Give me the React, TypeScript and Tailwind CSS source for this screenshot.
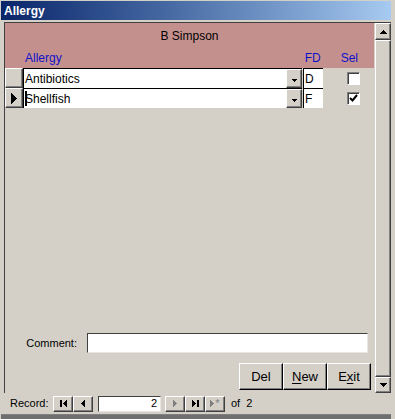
import React from "react";

// classic win9x bevels
const raised =
  "border border-t-white border-l-white border-r-[#404040] border-b-[#404040] shadow-[inset_-1px_-1px_0_#808080]";
const btnRaised =
  "border border-t-white border-l-white border-r-black border-b-black shadow-[inset_-1px_-1px_0_#808080]";
const sunken =
  "border border-t-[#404040] border-l-[#404040] border-r-[#e8e6e0] border-b-[#e8e6e0]";

const font = { fontFamily: '"Liberation Sans", Arial, sans-serif' };

type Dir = "left" | "right" | "up" | "down";

function Tri({ dir, w, h, color = "#000" }: { dir: Dir; w: number; h: number; color?: string }) {
  const d =
    dir === "left"
      ? `M${w} 0 L0 ${h / 2} L${w} ${h}Z`
      : dir === "right"
      ? `M0 0 L${w} ${h / 2} L0 ${h}Z`
      : dir === "up"
      ? `M0 ${h} L${w / 2} 0 L${w} ${h}Z`
      : `M0 0 L${w} 0 L${w / 2} ${h}Z`;
  return (
    <svg width={w} height={h} viewBox={`0 0 ${w} ${h}`} className="block">
      <path d={d} fill={color} shapeRendering="crispEdges" />
    </svg>
  );
}

function Checkbox({ checked }: { checked?: boolean }) {
  return (
    <div className="w-[13px] h-[13px] bg-white border border-t-[#808080] border-l-[#808080] border-r-white border-b-white shadow-[inset_1px_1px_0_#404040] flex items-center justify-center">
      {checked && (
        <svg width="9" height="9" viewBox="0 0 9 9" className="block">
          <path d="M1 4 L3.5 6.5 L8 1" stroke="#000" strokeWidth="2" fill="none" />
        </svg>
      )}
    </div>
  );
}

function Row({ name, fd, sel, current }: { name: string; fd: string; sel?: boolean; current?: boolean }) {
  return (
    <div className="flex h-[20px]">
      <div className={`w-[18px] ${raised} bg-[#d4d0c8] flex items-center justify-center`}>
        {current && <Tri dir="right" w={6} h={11} />}
      </div>
      <div className="w-[279px] flex bg-white border-t border-l border-black">
        <div className="flex-1 flex items-center pl-[1px] text-[12px] text-black">
          {current && <span className="w-[2px] h-[15px] bg-black -mr-[2px]" />}
          <span>{name}</span>
        </div>
        <div className={`w-[16px] ${raised} bg-[#d4d0c8] flex items-end justify-center pb-[5px]`}>
          <Tri dir="down" w={5} h={3} />
        </div>
      </div>
      <div className="w-[20px] ml-[1px] bg-white border-t border-l border-black flex items-center pl-[1px] text-[12px] text-black">
        {fd}
      </div>
      <div className="flex-1 pl-[24px] pt-[4px]">
        <Checkbox checked={sel} />
      </div>
    </div>
  );
}

function NavBtn({ children }: { children: React.ReactNode }) {
  return (
    <div className={`w-[20px] h-[16px] ${raised} bg-[#d4d0c8] flex items-center justify-center`}>{children}</div>
  );
}

export default function App() {
  return (
    <div
      className="w-[395px] h-[419px] bg-[#d4d0c8] flex flex-col pt-[1px] pl-[1px] pr-[4px] overflow-hidden"
      style={font}
    >
      {/* title bar */}
      <div className="h-[19px] bg-gradient-to-r from-[#0a246a] to-[#a6caf0] flex items-center pl-[3px]">
        <span className="text-white font-bold text-[12px] leading-none">Allergy</span>
      </div>

      {/* client */}
      <div className="mt-[2px] ml-[3px] h-[371px] flex border-t border-l border-[#404040]">
        <div className="flex-1 flex flex-col">
          {/* header */}
          <div className="h-[45px] bg-[#c4908e] flex flex-col">
            <div className="pt-[6px] text-center text-[12px] text-black leading-[14px]">B Simpson</div>
            <div className="mt-[8px] flex text-[12px] leading-[14px] text-[#1010c8]">
              <span className="ml-[20px]">Allergy</span>
              <span className="ml-[243px]">FD</span>
              <span className="ml-[20px]">Sel</span>
            </div>
          </div>

          <Row name="Antibiotics" fd="D" />
          <Row name="Shellfish" fd="F" sel current />

          <div className="flex-1" />

          {/* comment */}
          <div className="flex items-center h-[20px]">
            <span className="w-[72px] text-right text-[11px] text-black">Comment:</span>
            <div className={`ml-[10px] w-[281px] h-[20px] bg-white ${sunken}`} />
          </div>

          {/* buttons */}
          <div className="mt-[10px] mb-[3px] flex justify-end pr-[3px]">
            <button className={`w-[44px] h-[27px] ${btnRaised} bg-[#d4d0c8] text-[13px] text-black`}>Del</button>
            <button className={`w-[44px] h-[27px] ${btnRaised} bg-[#d4d0c8] text-[13px] text-black`}>
              <span className="underline underline-offset-2">N</span>ew
            </button>
            <button className={`w-[44px] h-[27px] ${btnRaised} bg-[#d4d0c8] text-[13px] text-black`}>
              E<span className="underline underline-offset-2">x</span>it
            </button>
          </div>
        </div>

        {/* vertical scrollbar */}
        <div className="w-[17px] pl-[1px] flex flex-col">
          <div className={`h-[17px] ${raised} bg-[#d4d0c8] flex items-center justify-center`}>
            <Tri dir="up" w={7} h={4} />
          </div>
          <div className={`flex-1 ${raised} bg-[#d4d0c8]`} />
          <div className={`h-[16px] ${raised} bg-[#d4d0c8] flex items-center justify-center`}>
            <Tri dir="down" w={7} h={4} />
          </div>
        </div>
      </div>

      {/* record navigation */}
      <div className="h-[21px] ml-[3px] flex items-center text-[11px] text-black">
        <span className="ml-[6px] w-[38px]">Record:</span>
        <div className="ml-[5px] flex">
          <NavBtn>
            <div className="flex items-center gap-[1px]">
              <div className="w-[2px] h-[7px] bg-black" />
              <Tri dir="left" w={4} h={7} />
            </div>
          </NavBtn>
          <NavBtn>
            <Tri dir="left" w={4} h={7} />
          </NavBtn>
        </div>
        <div className={`ml-[5px] w-[63px] h-[16px] bg-white ${sunken} flex items-center justify-end pr-[3px]`}>2</div>
        <div className="ml-[4px] flex">
          <NavBtn>
            <Tri dir="right" w={4} h={7} color="#808080" />
          </NavBtn>
          <NavBtn>
            <div className="flex items-center gap-[1px]">
              <Tri dir="right" w={4} h={7} />
              <div className="w-[2px] h-[7px] bg-black" />
            </div>
          </NavBtn>
          <NavBtn>
            <div className="flex items-center gap-[1px]">
              <Tri dir="right" w={4} h={7} color="#808080" />
              <span className="text-[#808080] text-[11px] leading-none">*</span>
            </div>
          </NavBtn>
        </div>
        <span className="ml-[6px]">of&nbsp; 2</span>
      </div>

      <div className="flex-1 border-t border-[#808080] bg-[#6f6f6f]" />
    </div>
  );
}
